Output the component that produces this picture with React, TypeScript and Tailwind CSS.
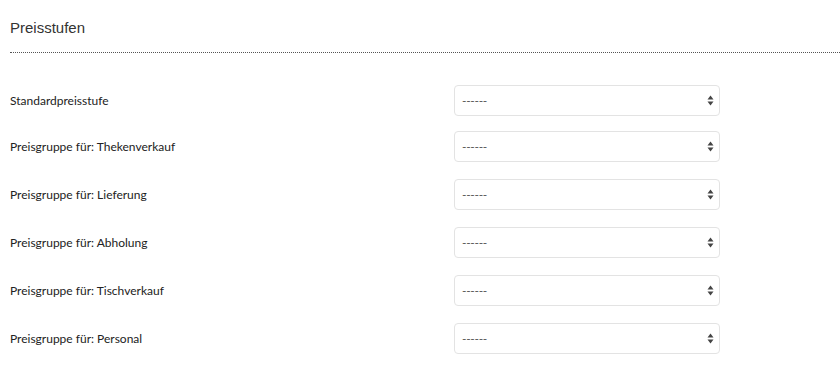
import React from "react";

const labels = [
  "Standardpreisstufe",
  "Preisgruppe für: Thekenverkauf",
  "Preisgruppe für: Lieferung",
  "Preisgruppe für: Abholung",
  "Preisgruppe für: Tischverkauf",
  "Preisgruppe für: Personal",
];

function Arrows() {
  return (
    <svg width="7" height="11" viewBox="0 0 7 11" className="block">
      <path d="M3.5 0.5 L6.5 4.5 L0.5 4.5 Z" fill="#444" />
      <path d="M3.5 10.5 L6.5 6.5 L0.5 6.5 Z" fill="#444" />
    </svg>
  );
}

export default function App() {
  return (
    <div className="w-[840px] h-[390px] bg-white pl-[10px]" style={{ fontFamily: "Lato, 'Liberation Sans', sans-serif" }}>
      <div className="pt-[18px] pb-[14px] border-b border-dotted border-[#555]">
        <div className="text-[15px] leading-[20px] text-[#333]" style={{ fontFamily: "'Liberation Sans', Arial, sans-serif" }}>
          Preisstufen
        </div>
      </div>
      <div className="pt-[32px] flex flex-col">
        {labels.map((l, i) => (
          <div key={l} className={`flex items-center h-[31px] ${i === 0 ? "mb-[15px]" : "mb-[17px]"}`}>
            <div className="w-[444px] text-[12px] text-[#222]">{l}</div>
            <div className="w-[266px] h-[31px] border border-[#e3e3e3] rounded-[4px] flex items-center justify-between pl-[7px] pr-[5px]">
              <span className="text-[12px] text-[#555] tracking-[-0.3px]">------</span>
              <Arrows />
            </div>
          </div>
        ))}
      </div>
    </div>
  );
}
